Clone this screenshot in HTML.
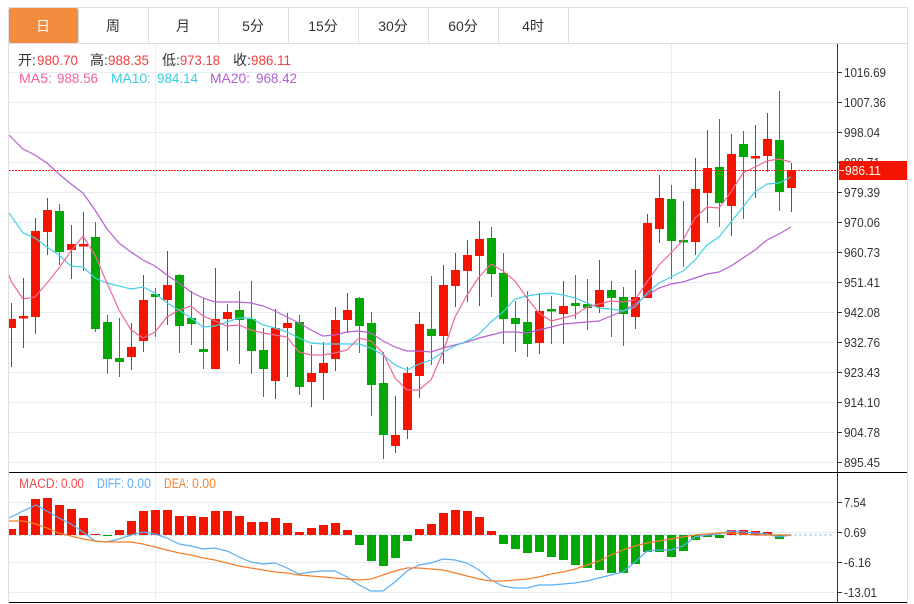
<!DOCTYPE html>
<html><head><meta charset="utf-8">
<style>
html,body{margin:0;padding:0;background:#fff;width:914px;height:604px;overflow:hidden}
svg{display:block}
text{font-family:"Liberation Sans","Noto Sans CJK SC",sans-serif}
.ax{font-size:13px;fill:#333}
.t{font-size:14px;fill:#333;text-anchor:middle}
.h{font-size:14px}
.m{font-size:13.5px}
</style></head><body>
<svg width="914" height="604" viewBox="0 0 914 604" xmlns="http://www.w3.org/2000/svg">
<defs><clipPath id="c"><rect x="9" y="44" width="829" height="558"/></clipPath></defs>
<!-- frame -->
<path d="M8 7.5H908M8.5 7V604M907.5 7V604M8 43.5H908M78.5 8V43M148.5 8V43M218.5 8V43M288.5 8V43M358.5 8V43M428.5 8V43M498.5 8V43M568.5 8V43" stroke="#dedede" fill="none"/>
<rect x="9" y="8" width="69" height="35" rx="2" fill="#f48c40"/>
<text class="t" x="43" y="31" style="fill:#fff">日</text>
<text class="t" x="113" y="31">周</text>
<text class="t" x="183" y="31">月</text>
<text class="t" x="253" y="31">5分</text>
<text class="t" x="323" y="31">15分</text>
<text class="t" x="393" y="31">30分</text>
<text class="t" x="463" y="31">60分</text>
<text class="t" x="533" y="31">4时</text>
<!-- grid -->
<path d="M9 72.5H838M9 102.5H838M9 132.5H838M9 162.5H838M9 192.5H838M9 222.5H838M9 252.5H838M9 282.5H838M9 312.5H838M9 342.5H838M9 372.5H838M9 402.5H838M9 432.5H838M9 462.5H838M9 502.5H838M9 532.5H838M9 562.5H838M9 592.5H838M155.5 44V602M671.5 44V602" stroke="#e3edf3" fill="none"/>
<g clip-path="url(#c)" fill="none">
<!-- red wicks -->
<path stroke="#e81a10" stroke-width="1" d="M11.5 303V367M23.5 278V348M35.5 218V334M47.5 198V255M71.5 225V279M83.5 212V271M131.5 323V370M143.5 275V352M167.5 251V325M215.5 268V369M227.5 304V351M275.5 309V399M287.5 313V377M311.5 345V407M323.5 342V400M335.5 307V371M347.5 293V333M395.5 396V453M407.5 367V439M419.5 312V398M443.5 265V364M455.5 253V307M467.5 240V302M479.5 221V306M539.5 293V354M563.5 281V344M599.5 260V313M635.5 270V329M647.5 214V298M659.5 175V243M695.5 158V255M707.5 130V223M731.5 134V236M755.5 125V198M767.5 113V172M791.5 163V212"/>
<!-- green wicks -->
<path stroke="#0f9f0f" stroke-width="1" d="M59.5 204V265M95.5 222V332M107.5 315V374M119.5 318V377M155.5 288V337M179.5 274V353M191.5 291V345M203.5 298V369M239.5 291V364M251.5 281V374M263.5 328V397M299.5 315V395M359.5 297V353M371.5 312V416M383.5 352V459M431.5 276V365M491.5 227V297M503.5 253V344M515.5 301V352M527.5 291V357M551.5 296V344M575.5 275V319M587.5 279V330M611.5 281V337M623.5 287V346M671.5 185V279M683.5 201V267M719.5 119V227M743.5 131V219M779.5 91V211"/>
<!-- red bodies -->
<path stroke="#f41500" stroke-width="9" d="M11.5 319V328M23.5 316V318.5M35.5 231V317M47.5 210V232M71.5 244V250M83.5 244V246.5M131.5 347V357M143.5 300V341M167.5 285V300M215.5 319V369M227.5 312V319M275.5 328V381M287.5 323V328M311.5 373V382M323.5 363V373M335.5 320V359M347.5 310V320M395.5 435V446M407.5 373V430M419.5 324V376M443.5 285V336M455.5 270V286M467.5 255V271M479.5 239V256M539.5 311V343M563.5 306V314M599.5 290V307M635.5 297V317M647.5 223V298M659.5 198V229M695.5 189V242M707.5 168V193M731.5 154V206M755.5 156V158.5M767.5 139V156M791.5 170V188"/>
<!-- green bodies -->
<path stroke="#04a804" stroke-width="9" d="M59.5 211V252M95.5 237V329M107.5 322V359M119.5 358V362M155.5 294V297M179.5 275V326M191.5 318V324M203.5 349V352M239.5 310V320M251.5 319V351M263.5 350V369M299.5 322V387M359.5 298V326M371.5 323V385M383.5 383V435M431.5 329V336M491.5 238V274M503.5 273V319M515.5 318V324M527.5 322V344M551.5 309V311.5M575.5 303V306M587.5 304V308M611.5 290V298M623.5 297V314M671.5 199V241M683.5 240V242.5M719.5 167V203M743.5 144V157M779.5 140V192"/>
<!-- MA20 -->
<polyline stroke="#b660d2" stroke-width="1.2" points="9,135 23,149 35,155 47,163 59,174 71,184 83,193 95,210 107,229 119,243 131,252 143,260 155,266 167,275 179,283 191,292 203,298 215,302 227,302 239,302 251,303 263,306 275,311 287,317 299,323 311,330 323,336 335,335 347,332 359,331 371,333 383,341 395,347 407,351 419,351 431,352 443,348 455,345 467,342 479,338 491,335 503,332 515,332 527,333 539,330 551,327 563,324 575,323 587,322 599,321 611,316 623,311 635,304 647,295 659,288 671,284 683,282 695,278 707,274 719,272 731,266 743,258 755,250 767,240 779,234 791,227"/>
<!-- MA10 -->
<polyline stroke="#45d0e6" stroke-width="1.2" points="9,213 23,233 35,238 47,247 59,255 71,266 83,267 95,278 107,283 119,286 131,289 143,287 155,293 167,303 179,310 191,318 203,327 215,326 227,322 239,318 251,318 263,325 275,328 287,332 299,338 311,343 323,344 335,344 347,344 359,344 371,348 383,355 395,365 407,370 419,364 431,360 443,352 455,346 467,341 479,334 491,322 503,312 515,299 527,296 539,294 551,293 563,295 575,298 587,303 599,308 611,309 623,311 635,307 647,293 659,283 671,277 683,271 695,260 707,245 719,237 731,222 743,207 755,192 767,184 779,183 791,177"/>
<!-- MA5 -->
<polyline stroke="#f0669a" stroke-width="1.2" points="9,275 11,281 23,299 35,297 47,283 59,268 71,251 83,236 95,255 107,283 119,310 131,330 143,338 155,332 167,317 179,310 191,306 203,316 215,321 227,326 239,325 251,330 263,333 275,335 287,337 299,352 311,355 323,355 335,353 347,350 359,338 371,341 383,353 395,378 407,390 419,390 431,380 443,352 455,317 467,295 479,277 491,264 503,271 515,281 527,298 539,313 551,321 563,318 575,315 587,307 599,304 611,301 623,302 635,300 647,282 659,265 671,253 683,240 695,218 707,207 719,208 731,192 743,173 755,167 767,161 779,159 791,162"/>
<!-- MACD -->
<path stroke="#c5e3f1" stroke-width="2" stroke-dasharray="3 2" d="M9 535H833"/>
<path stroke="#f41500" stroke-width="9" d="M11.5 529V535M23.5 516V535M35.5 499V535M47.5 498V535M59.5 505V535M71.5 509V535M83.5 518V535M95.5 534V535M119.5 530V535M131.5 521V535M143.5 511V535M155.5 510V535M167.5 510V535M179.5 516V535M191.5 516V535M203.5 517V535M215.5 511V535M227.5 511V535M239.5 516V535M251.5 522V535M263.5 522V535M275.5 518V535M287.5 523V535M299.5 532V535M311.5 528V535M323.5 525V535M335.5 523V535M347.5 530V535M419.5 529V535M431.5 524V535M443.5 513V535M455.5 510V535M467.5 511V535M479.5 517V535M491.5 531V535M731.5 530V535M743.5 530V535M755.5 531V535M767.5 532V535"/>
<path stroke="#04a804" stroke-width="9" d="M107.5 535V536M359.5 535V545M371.5 535V561M383.5 535V566M395.5 535V558M407.5 535V541M503.5 535V544M515.5 535V549M527.5 535V553M539.5 535V552M551.5 535V557M563.5 535V560M575.5 535V565M587.5 535V568M599.5 535V570M611.5 535V573M623.5 535V573M635.5 535V564M647.5 535V552M659.5 535V552M671.5 535V557M683.5 535V551M695.5 535V540M707.5 535V537M719.5 535V538M779.5 535V539"/>
<!-- DIFF -->
<polyline stroke="#5aaef5" stroke-width="1.2" points="9,518 23,511 36,505 47,511 59,518 71,524 83,532 95,541 107,542 119,539 131,535 143,532 155,534 167,538 179,544 191,546 203,549 215,548 227,551 239,557 251,562 263,564 275,563 287,568 299,574 311,572 323,571 335,571 347,577 359,585 371,591 383,591 395,582 407,571 419,565 431,563 443,559 455,560 467,563 479,570 491,580 503,586 515,588 527,588 539,585 551,585 563,584 575,583 587,581 599,578 611,575 623,572 635,562 647,551 659,550 671,550 683,546 695,537 707,535 719,534 731,531 743,532 755,533 767,534 779,537 791,535"/>
<!-- DEA -->
<polyline stroke="#f57f2a" stroke-width="1.2" points="9,521 23,521 36,524 47,528 59,533 71,536 83,539 95,541 107,542 119,542 131,542 143,544 155,547 167,550 179,553 191,555 203,558 215,560 227,563 239,566 251,568 263,570 275,572 287,573 299,575 311,576 323,577 335,578 347,579 359,580 371,579 383,575 395,571 407,568 419,568 431,569 443,570 455,573 467,576 479,579 491,581 503,581 515,580 527,579 539,577 551,574 563,572 575,569 587,565 599,561 611,555 623,550 635,546 647,543 659,541 671,539 683,537 695,535 707,534 719,533 731,533 743,534 755,535 767,535 779,535 791,535"/>
</g>
<!-- axis -->
<path stroke="#000" fill="none" d="M9 472.5H907M9 602.5H907"/>
<path stroke="#333" fill="none" d="M837.5 44V603M838 72.5H842M838 102.5H842M838 132.5H842M838 162.5H842M838 192.5H842M838 222.5H842M838 252.5H842M838 282.5H842M838 312.5H842M838 342.5H842M838 372.5H842M838 402.5H842M838 432.5H842M838 462.5H842M838 502.5H842M838 532.5H842M838 562.5H842M838 592.5H842"/>
<text class="ax" x="844" y="77" textLength="42" lengthAdjust="spacingAndGlyphs">1016.69</text>
<text class="ax" x="844" y="107" textLength="42" lengthAdjust="spacingAndGlyphs">1007.36</text>
<text class="ax" x="844" y="137" textLength="36" lengthAdjust="spacingAndGlyphs">998.04</text>
<text class="ax" x="844" y="167" textLength="36" lengthAdjust="spacingAndGlyphs">988.71</text>
<text class="ax" x="844" y="197" textLength="36" lengthAdjust="spacingAndGlyphs">979.39</text>
<text class="ax" x="844" y="227" textLength="36" lengthAdjust="spacingAndGlyphs">970.06</text>
<text class="ax" x="844" y="257" textLength="36" lengthAdjust="spacingAndGlyphs">960.73</text>
<text class="ax" x="844" y="287" textLength="36" lengthAdjust="spacingAndGlyphs">951.41</text>
<text class="ax" x="844" y="317" textLength="36" lengthAdjust="spacingAndGlyphs">942.08</text>
<text class="ax" x="844" y="347" textLength="36" lengthAdjust="spacingAndGlyphs">932.76</text>
<text class="ax" x="844" y="377" textLength="36" lengthAdjust="spacingAndGlyphs">923.43</text>
<text class="ax" x="844" y="407" textLength="36" lengthAdjust="spacingAndGlyphs">914.10</text>
<text class="ax" x="844" y="437" textLength="36" lengthAdjust="spacingAndGlyphs">904.78</text>
<text class="ax" x="844" y="467" textLength="36" lengthAdjust="spacingAndGlyphs">895.45</text>
<text class="ax" x="844" y="507" textLength="22" lengthAdjust="spacingAndGlyphs">7.54</text>
<text class="ax" x="844" y="537" textLength="22" lengthAdjust="spacingAndGlyphs">0.69</text>
<text class="ax" x="844" y="567" textLength="27" lengthAdjust="spacingAndGlyphs">-6.16</text>
<text class="ax" x="844" y="597" textLength="33" lengthAdjust="spacingAndGlyphs">-13.01</text>
<!-- last price -->
<path stroke="#f22" stroke-width="1" stroke-dasharray="2 1" d="M9 170.5H839"/>
<rect x="839" y="161" width="68" height="19" fill="#f41500"/>
<path stroke="#fff" d="M839 170.5H844"/>
<text x="845" y="175" font-size="13" fill="#fff" textLength="36" lengthAdjust="spacingAndGlyphs">986.11</text>
<!-- header texts -->
<text class="h" x="18" y="65" fill="#333">开:</text><text class="h" x="37" y="65" fill="#f33e3e" textLength="41" lengthAdjust="spacingAndGlyphs">980.70</text>
<text class="h" x="90" y="65" fill="#333">高:</text><text class="h" x="108" y="65" fill="#f33e3e" textLength="41" lengthAdjust="spacingAndGlyphs">988.35</text>
<text class="h" x="162" y="65" fill="#333">低:</text><text class="h" x="180" y="65" fill="#f33e3e" textLength="40" lengthAdjust="spacingAndGlyphs">973.18</text>
<text class="h" x="233" y="65" fill="#333">收:</text><text class="h" x="251" y="65" fill="#f33e3e" textLength="40" lengthAdjust="spacingAndGlyphs">986.11</text>
<text class="h" x="19" y="83" fill="#f0659b" textLength="33" lengthAdjust="spacingAndGlyphs">MA5:</text><text class="h" x="57" y="83" fill="#f0659b" textLength="41" lengthAdjust="spacingAndGlyphs">988.56</text>
<text class="h" x="111" y="83" fill="#37cde3" textLength="40" lengthAdjust="spacingAndGlyphs">MA10:</text><text class="h" x="157" y="83" fill="#37cde3" textLength="41" lengthAdjust="spacingAndGlyphs">984.14</text>
<text class="h" x="210" y="83" fill="#b25fd0" textLength="40" lengthAdjust="spacingAndGlyphs">MA20:</text><text class="h" x="256" y="83" fill="#b25fd0" textLength="41" lengthAdjust="spacingAndGlyphs">968.42</text>
<text class="m" x="19" y="488" fill="#f44c4c" textLength="39" lengthAdjust="spacingAndGlyphs">MACD:</text><text class="m" x="61" y="488" fill="#f44c4c" textLength="23" lengthAdjust="spacingAndGlyphs">0.00</text>
<text class="m" x="97" y="488" fill="#5aaef5" textLength="27" lengthAdjust="spacingAndGlyphs">DIFF:</text><text class="m" x="127" y="488" fill="#5aaef5" textLength="24" lengthAdjust="spacingAndGlyphs">0.00</text>
<text class="m" x="164" y="488" fill="#f5832f" textLength="25" lengthAdjust="spacingAndGlyphs">DEA:</text><text class="m" x="192" y="488" fill="#f5832f" textLength="24" lengthAdjust="spacingAndGlyphs">0.00</text>
</svg>
</body></html>
